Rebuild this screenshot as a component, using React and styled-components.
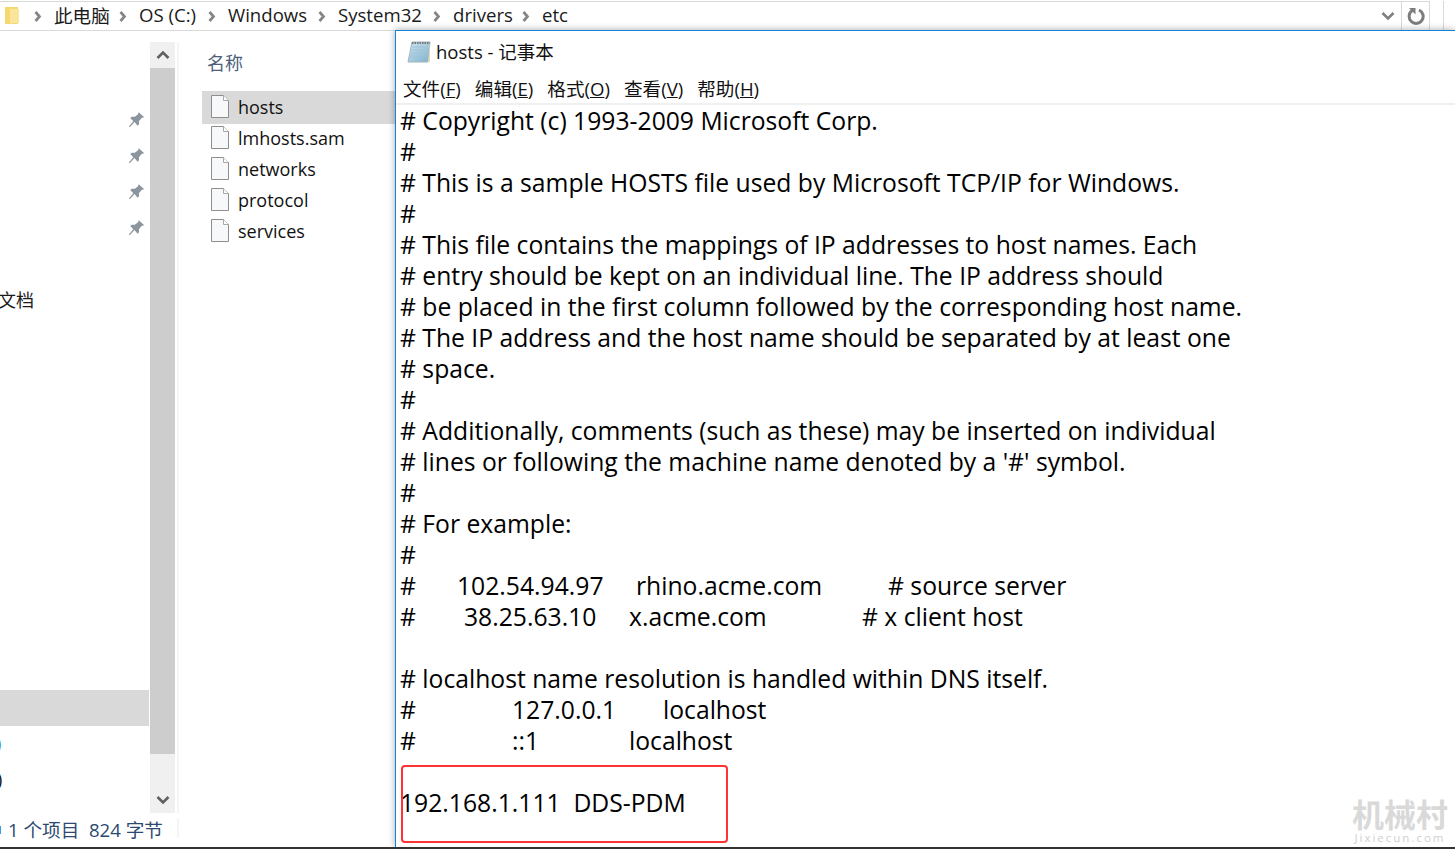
import React from 'react';
import styled, { createGlobalStyle } from 'styled-components';

const UI_FONT = '"Open Sans", "Noto Sans CJK SC", sans-serif';

const GlobalStyle = createGlobalStyle`
  html, body { margin: 0; padding: 0; background: #fff; }
  body { font-family: ${UI_FONT}; overflow: hidden; }
`;

const crumbs = [
  { label: '此电脑', w: 85 },
  { label: 'OS (C:)', w: 89 },
  { label: 'Windows', w: 110 },
  { label: 'System32', w: 115 },
  { label: 'drivers', w: 89 },
  { label: 'etc', w: 60 },
];

const navRows = [
  { pin: true }, { pin: true }, { pin: true }, { pin: true }, {},
  { text: '文档' }, {}, {}, {}, {}, {}, {}, {}, {}, {}, {},
  { selected: true },
  { text: ')', color: '#1a7fd0', offset: -4 },
  { text: ')', color: '#111', offset: -3 },
];

const files = ['hosts', 'lmhosts.sam', 'networks', 'protocol', 'services'];

const menus = [
  { label: '文件', key: 'F' },
  { label: '编辑', key: 'E' },
  { label: '格式', key: 'O' },
  { label: '查看', key: 'V' },
  { label: '帮助', key: 'H' },
];

const hostsLines = [
  ['# Copyright (c) 1993-2009 Microsoft Corp.'],
  ['#'],
  ['# This is a sample HOSTS file used by Microsoft TCP/IP for Windows.'],
  ['#'],
  ['# This file contains the mappings of IP addresses to host names. Each'],
  ['# entry should be kept on an individual line. The IP address should'],
  ['# be placed in the first column followed by the corresponding host name.'],
  ['# The IP address and the host name should be separated by at least one'],
  ['# space.'],
  ['#'],
  ['# Additionally, comments (such as these) may be inserted on individual'],
  ["# lines or following the machine name denoted by a '#' symbol."],
  ['#'],
  ['# For example:'],
  ['#'],
  [['#', 57], ['102.54.94.97', 179], ['rhino.acme.com', 252], ['# source server']],
  [['#', 64], ['38.25.63.10', 165], ['x.acme.com', 233], ['# x client host']],
  [''],
  ['# localhost name resolution is handled within DNS itself.'],
  [['#', 112], ['127.0.0.1', 151], ['localhost']],
  [['#', 112], ['::1', 117], ['localhost']],
  [''],
  ['192.168.1.111  DDS-PDM'],
];

const FolderIcon = () => (
  <svg width="15" height="20" viewBox="0 0 15 20">
    <path d="M0 1h13v17H0z" fill="#f6d873" />
    <path d="M5 3h9v14H7l-2 2z" fill="#fbe59b" />
  </svg>
);

const Chevron = () => (
  <svg width="8" height="11" viewBox="0 0 8 11">
    <path d="M1.5 1l4 4.5-4 4.500" fill="none" stroke="#858585" strokeWidth="2.7" />
  </svg>
);

const ChevronV = ({ up, color = '#7f7f7f' }) => (
  <svg width="14" height="10" viewBox="0 0 14 10">
    <path d={up ? 'M1.5 8L7 2.5 12.5 8' : 'M1.5 2L7 7.5 12.5 2'} fill="none" stroke={color} strokeWidth="2.6" />
  </svg>
);

const RefreshIcon = () => (
  <svg width="18" height="18" viewBox="0 0 18 18">
    <path d="M5.2 3.6A7 7 0 1 0 12 3" fill="none" stroke="#7d7d7d" strokeWidth="3" />
    <path d="M2 1h6.500v6.500z" fill="#7d7d7d" />
  </svg>
);

const PinIcon = () => (
  <svg width="18" height="18" viewBox="0 0 16 16">
    <path d="M9.500 1l5 4.600-2.200.5-2.600 3 .1 2.700-1.300 1.200L5.800 9.800 1.500 14.500l-.7-.7L4.700 9 2 6.200l1.300-1.200 2.800.2 2.800-2.400z" fill="#8b959e" />
  </svg>
);

const FileIcon = () => (
  <svg width="18" height="23" viewBox="0 0 18 23">
    <path d="M.5.5h12l5 5v17H.5z" fill="#f7f8f9" stroke="#8e8e8e" />
    <path d="M12.500.5v5h5" fill="#fff" stroke="#a8a8a8" />
  </svg>
);

const NotepadIcon = () => (
  <svg width="24" height="24" viewBox="0 0 24 24">
    <defs>
      <linearGradient id="pad" x1="0" y1="0" x2="1" y2="1">
        <stop offset="0" stopColor="#cfe4ee" />
        <stop offset="1" stopColor="#7fb2cc" />
      </linearGradient>
    </defs>
    <path d="M5 2h18l-2 20H1z" fill="url(#pad)" stroke="#9fb6c2" />
    <path d="M5 7h15M4.500 10h15M4 13h15M3.500 16h15" stroke="#9cc4d8" />
    <path d="M5 3h18" stroke="#777" strokeWidth="2" strokeDasharray="1.500 1" />
    <path d="M21 22l2-20v20z" fill="#e4d9b8" />
  </svg>
);

export default function App() {
  return (
    <Page>
      <GlobalStyle />
      <AddressBar>
        <FolderSlot>
          <FolderIcon />
        </FolderSlot>
        <Crumbs>
          {crumbs.map((c) => (
            <Crumb key={c.label} $w={c.w}>
              <ChevronSlot>
                <Chevron />
              </ChevronSlot>
              <CrumbLabel>{c.label}</CrumbLabel>
            </Crumb>
          ))}
        </Crumbs>
        <DropSlot>
          <ChevronV />
        </DropSlot>
        <RefreshSlot>
          <RefreshIcon />
        </RefreshSlot>
        <BarTail />
      </AddressBar>
      <Main>
        <Explorer>
          <ExplorerBody>
            <Nav>
              {navRows.map((row, i) => (
                <NavRow key={i} $selected={row.selected}>
                  {row.pin && (
                    <PinSlot>
                      <PinIcon />
                    </PinSlot>
                  )}
                  {row.text && (
                    <NavText $color={row.color} $offset={row.offset}>
                      {row.text}
                    </NavText>
                  )}
                </NavRow>
              ))}
            </Nav>
            <Scrollbar>
              <ScrollButton>
                <ChevronV up color="#606060" />
              </ScrollButton>
              <ScrollThumb />
              <ScrollButton>
                <ChevronV color="#606060" />
              </ScrollButton>
            </Scrollbar>
            <FileColumn>
              <ColumnHeader>名称</ColumnHeader>
              {files.map((name, i) => (
                <FileRow key={name} $selected={i === 0}>
                  <FileIcon />
                  <span>{name}</span>
                </FileRow>
              ))}
            </FileColumn>
          </ExplorerBody>
          <StatusBar>
            <StatusText>1 个项目&nbsp;&nbsp;824 字节</StatusText>
          </StatusBar>
        </Explorer>
        <Notepad>
          <TitleBar>
            <NotepadIcon />
            <TitleText>hosts - 记事本</TitleText>
          </TitleBar>
          <MenuBar>
            {menus.map((m) => (
              <MenuItem key={m.key}>
                {m.label}(<u>{m.key}</u>)
              </MenuItem>
            ))}
          </MenuBar>
          <Editor>
            {hostsLines.map((line, i) => (
              <Line key={i}>
                {line.map((part, j) =>
                  Array.isArray(part) ? (
                    <Cell key={j} $w={part[1]}>
                      {part[0]}
                    </Cell>
                  ) : (
                    <span key={j}>{part}</span>
                  )
                )}
              </Line>
            ))}
            <RedMark />
          </Editor>
          <Watermark>
            <WatermarkTitle>机械村</WatermarkTitle>
            <WatermarkUrl>Jixiecun.com</WatermarkUrl>
          </Watermark>
        </Notepad>
      </Main>
      <BottomEdge />
    </Page>
  );
}

const Page = styled.div`
  width: 1455px;
  height: 849px;
  display: flex;
  flex-direction: column;
  overflow: hidden;
  background: #fff;
`;

const AddressBar = styled.div`
  height: 30px;
  flex: none;
  display: flex;
  align-items: stretch;
  box-sizing: border-box;
  padding-top: 1px;
`;

const FolderSlot = styled.div`
  width: 26px;
  flex: none;
  display: flex;
  align-items: center;
  padding-left: 5px;
  box-sizing: border-box;
  border-top: 1px solid #d9d9d9;
`;

const Crumbs = styled.div`
  flex: 1;
  display: flex;
  align-items: center;
  border-top: 1px solid #d9d9d9;
`;

const Crumb = styled.div`
  width: ${(p) => p.$w}px;
  flex: none;
  display: flex;
  align-items: center;
  font-size: 18.6px;
  color: #1a1a1a;
  white-space: nowrap;
`;

const CrumbLabel = styled.span`
  margin-top: -3px;
`;

const ChevronSlot = styled.span`
  width: 28px;
  padding-left: 8px;
  box-sizing: border-box;
  display: flex;
  flex: none;
`;

const DropSlot = styled.div`
  width: 26px;
  flex: none;
  display: flex;
  align-items: center;
  justify-content: center;
  border-top: 1px solid #d9d9d9;
`;

const RefreshSlot = styled.div`
  width: 29px;
  flex: none;
  display: flex;
  align-items: center;
  justify-content: center;
  box-sizing: border-box;
  border: 1px solid #d9d9d9;
  border-bottom: none;
`;

const BarTail = styled.div`
  width: 13px;
  flex: none;
  margin-right: 11px;
  border-right: 1px solid #d9d9d9;
`;

const Main = styled.div`
  flex: 1;
  min-height: 0;
  display: flex;
`;

const Explorer = styled.div`
  width: 395px;
  flex: none;
  display: flex;
  flex-direction: column;
  border-top: 1px solid #d9d9d9;
  box-sizing: border-box;
`;

const ExplorerBody = styled.div`
  height: 782px;
  flex: none;
  padding-top: 11px;
  box-sizing: border-box;
  display: flex;
  overflow: hidden;
`;

const Nav = styled.div`
  width: 150px;
  flex: none;
  padding-top: 60px;
  box-sizing: border-box;
  overflow: hidden;
`;

const NavRow = styled.div`
  height: 36px;
  width: 149px;
  display: flex;
  align-items: center;
  margin-top: ${(p) => (p.$selected ? 12 : 0)}px;
  background: ${(p) => (p.$selected ? '#d9d9d9' : 'transparent')};
`;

const PinSlot = styled.span`
  margin-left: 128px;
  display: flex;
`;

const NavText = styled.span`
  font-size: 18px;
  margin-top: -2px;
  color: ${(p) => p.$color || '#1a1a1a'};
  margin-left: ${(p) => p.$offset || -2}px;
`;

const Scrollbar = styled.div`
  width: 25px;
  flex: none;
  display: flex;
  flex-direction: column;
  background: #f0f0f0;
`;

const ScrollButton = styled.div`
  height: 26px;
  flex: none;
  display: flex;
  align-items: center;
  justify-content: center;
`;

const ScrollThumb = styled.div`
  height: 686px;
  flex: none;
  background: #cdcdcd;
  margin-bottom: auto;
`;

const FileColumn = styled.div`
  flex: 1;
  margin-left: 2px;
  padding-left: 23px;
  border-left: 2px solid #f5f5f5;
  display: flex;
  flex-direction: column;
`;

const ColumnHeader = styled.div`
  height: 40px;
  margin-bottom: 9px;
  padding-left: 5px;
  display: flex;
  align-items: center;
  font-size: 18px;
  color: #4c607a;
`;

const FileRow = styled.div`
  height: ${(p) => (p.$selected ? 33 : 31)}px;
  margin-bottom: ${(p) => (p.$selected ? -1 : 0)}px;
  flex: none;
  box-sizing: border-box;
  padding-bottom: 2px;
  display: flex;
  align-items: center;
  gap: 9px;
  padding-left: 9px;
  font-size: 18px;
  color: #111;
  background: ${(p) => (p.$selected ? '#d9d9d9' : 'transparent')};
`;

const StatusBar = styled.div`
  flex: 1;
  display: flex;
  align-items: flex-start;
  padding-top: 5px;
  position: relative;

  &::before {
    content: '';
    position: absolute;
    left: 0;
    top: 13px;
    width: 1px;
    height: 8px;
    background: #3a9be0;
  }
`;

const StatusText = styled.div`
  width: 169px;
  height: 20px;
  padding-left: 8px;
  font-size: 18.6px;
  line-height: 24px;
  color: #2c4a70;
  white-space: nowrap;
  border-right: 2px solid #f5f5f5;
`;

const Notepad = styled.div`
  flex: 1;
  position: relative;
  min-width: 0;
  border-top: 1px solid #1583d7;
  border-left: 1px solid #1583d7;
  box-shadow: 0 0 7px rgba(0, 0, 0, 0.35);
  background: #fff;
  display: flex;
  flex-direction: column;
  color: #000;
`;

const TitleBar = styled.div`
  height: 41px;
  flex: none;
  display: flex;
  align-items: center;
  gap: 5px;
  padding-left: 11px;
  font-size: 18.5px;
  color: #111;
`;

const TitleText = styled.span`
  margin-top: -2px;
`;

const MenuBar = styled.div`
  height: 31px;
  flex: none;
  display: flex;
  align-items: center;
  gap: 14px;
  padding-left: 7px;
  font-size: 18.6px;
  color: #111;
  border-bottom: 2px solid #f0f0f0;
`;

const MenuItem = styled.span`
  white-space: nowrap;
`;

const Editor = styled.div`
  flex: 1;
  position: relative;
  padding: 0 0 0 4px;
  font-size: 24.7px;
`;

const Line = styled.div`
  height: 31px;
  line-height: 31px;
  display: flex;
  white-space: pre;
`;

const Cell = styled.span`
  width: ${(p) => p.$w}px;
  flex: none;
`;

const RedMark = styled.div`
  position: absolute;
  left: 5px;
  top: 660px;
  width: 327px;
  height: 78px;
  box-sizing: border-box;
  border: 2px solid #f33;
  border-radius: 4px;
`;

const Watermark = styled.div`
  position: absolute;
  right: 7px;
  bottom: 3px;
  display: flex;
  flex-direction: column;
  align-items: center;
  gap: 1px;
`;

const WatermarkTitle = styled.div`
  font-size: 32px;
  line-height: 32px;
  font-weight: 700;
  color: #d9d9d9;
`;

const WatermarkUrl = styled.div`
  font-size: 11.5px;
  line-height: 12px;
  letter-spacing: 2px;
  color: #cfcfcf;
`;

const BottomEdge = styled.div`
  height: 2px;
  flex: none;
  background: #333;
  position: relative;
  z-index: 2;
`;
